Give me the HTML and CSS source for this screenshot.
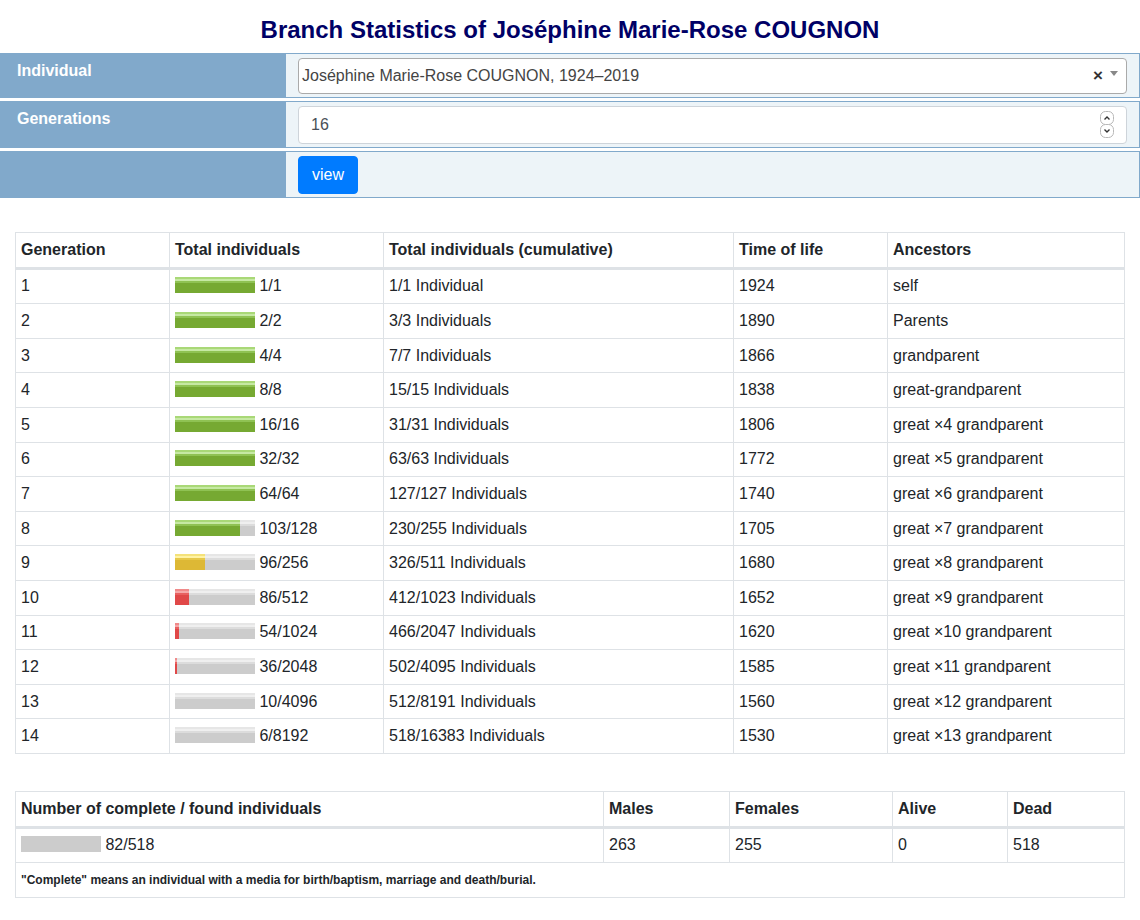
FILE: index.html
```html
<!DOCTYPE html>
<html lang="en">
<head>
<meta charset="utf-8">
<title>Branch Statistics</title>
<link rel="stylesheet" href="styles.css">
</head>
<body>
<h2 class="title">Branch Statistics of Joséphine Marie-Rose COUGNON</h2>

<div class="form">
  <div class="form-row">
    <div class="label">Individual</div>
    <div class="field">
      <div class="select">
        <span class="select-text">Joséphine Marie-Rose COUGNON, 1924–2019</span>
        <span class="select-clear">×</span>
        <span class="select-arrow"></span>
      </div>
    </div>
  </div>
  <div class="form-row">
    <div class="label">Generations</div>
    <div class="field">
      <div class="number">
        <span class="number-text">16</span>
        <svg class="spin" width="14" height="28" viewBox="0 0 14 28">
          <rect x="0.5" y="0.5" width="13" height="13" rx="5" fill="#fff" stroke="#b8b8b8"/>
          <rect x="0.5" y="13.5" width="13" height="13" rx="5" fill="#fff" stroke="#b8b8b8"/>
          <path d="M4.5 8.5 L7 6 L9.5 8.5" fill="none" stroke="#333" stroke-width="1.4"/>
          <path d="M4.5 18.5 L7 21 L9.5 18.5" fill="none" stroke="#333" stroke-width="1.4"/>
        </svg>
      </div>
    </div>
  </div>
  <div class="form-row">
    <div class="label"></div>
    <div class="field">
      <button class="btn">view</button>
    </div>
  </div>
</div>

<table class="tbl gen-table">
  <colgroup>
    <col style="width:154px"><col style="width:214px"><col style="width:350px"><col style="width:154px"><col>
  </colgroup>
  <thead>
    <tr><th>Generation</th><th>Total individuals</th><th>Total individuals (cumulative)</th><th>Time of life</th><th>Ancestors</th></tr>
  </thead>
  <tbody>
    <tr><td>1</td><td><span class="bar"><span class="fill green" style="width:80px"></span></span> 1/1</td><td>1/1 Individual</td><td>1924</td><td>self</td></tr>
    <tr><td>2</td><td><span class="bar"><span class="fill green" style="width:80px"></span></span> 2/2</td><td>3/3 Individuals</td><td>1890</td><td>Parents</td></tr>
    <tr><td>3</td><td><span class="bar"><span class="fill green" style="width:80px"></span></span> 4/4</td><td>7/7 Individuals</td><td>1866</td><td>grandparent</td></tr>
    <tr><td>4</td><td><span class="bar"><span class="fill green" style="width:80px"></span></span> 8/8</td><td>15/15 Individuals</td><td>1838</td><td>great-grandparent</td></tr>
    <tr><td>5</td><td><span class="bar"><span class="fill green" style="width:80px"></span></span> 16/16</td><td>31/31 Individuals</td><td>1806</td><td>great ×4 grandparent</td></tr>
    <tr><td>6</td><td><span class="bar"><span class="fill green" style="width:80px"></span></span> 32/32</td><td>63/63 Individuals</td><td>1772</td><td>great ×5 grandparent</td></tr>
    <tr><td>7</td><td><span class="bar"><span class="fill green" style="width:80px"></span></span> 64/64</td><td>127/127 Individuals</td><td>1740</td><td>great ×6 grandparent</td></tr>
    <tr><td>8</td><td><span class="bar"><span class="fill green" style="width:65px"></span></span> 103/128</td><td>230/255 Individuals</td><td>1705</td><td>great ×7 grandparent</td></tr>
    <tr><td>9</td><td><span class="bar"><span class="fill yellow" style="width:30px"></span></span> 96/256</td><td>326/511 Individuals</td><td>1680</td><td>great ×8 grandparent</td></tr>
    <tr><td>10</td><td><span class="bar"><span class="fill red" style="width:14px"></span></span> 86/512</td><td>412/1023 Individuals</td><td>1652</td><td>great ×9 grandparent</td></tr>
    <tr><td>11</td><td><span class="bar"><span class="fill red" style="width:4px"></span></span> 54/1024</td><td>466/2047 Individuals</td><td>1620</td><td>great ×10 grandparent</td></tr>
    <tr><td>12</td><td><span class="bar"><span class="fill red" style="width:2px"></span></span> 36/2048</td><td>502/4095 Individuals</td><td>1585</td><td>great ×11 grandparent</td></tr>
    <tr><td>13</td><td><span class="bar"><span class="fill red" style="width:0px"></span></span> 10/4096</td><td>512/8191 Individuals</td><td>1560</td><td>great ×12 grandparent</td></tr>
    <tr><td>14</td><td><span class="bar"><span class="fill red" style="width:0px"></span></span> 6/8192</td><td>518/16383 Individuals</td><td>1530</td><td>great ×13 grandparent</td></tr>
  </tbody>
</table>

<table class="tbl sum-table">
  <colgroup>
    <col style="width:588px"><col style="width:126px"><col style="width:163px"><col style="width:115px"><col>
  </colgroup>
  <thead>
    <tr><th>Number of complete / found individuals</th><th>Males</th><th>Females</th><th>Alive</th><th>Dead</th></tr>
  </thead>
  <tbody>
    <tr><td><span class="bar flat"></span> 82/518</td><td>263</td><td>255</td><td>0</td><td>518</td></tr>
    <tr><td colspan="5" class="note">"Complete" means an individual with a media for birth/baptism, marriage and death/burial.</td></tr>
  </tbody>
</table>
</body>
</html>
```
FILE: styles.css
```css
* { box-sizing: border-box; }
body {
  margin: 0;
  font-family: "Liberation Sans", Arial, sans-serif;
  font-size: 16px;
  line-height: 24px;
  color: #212529;
  background: #fff;
}
.title {
  margin: 0;
  padding: 16px 0 11px;
  height: 53px;
  text-align: center;
  font-size: 24px;
  line-height: 28px;
  font-weight: bold;
  color: #000066;
}
.form {
  display: flex;
  flex-direction: column;
  gap: 3px;
}
.form-row {
  display: grid;
  grid-template-columns: 285px 1fr;
}
.label {
  background: #81a9cb;
  color: #fff;
  font-weight: bold;
  padding: 6px 17px;
}
.field {
  background: #edf4f8;
  border: 1px solid #81a9cb;
  padding: 4px 12px 3px;
}
.select {
  height: 36px;
  border: 1px solid #aaa;
  border-radius: 4px;
  background: #fff;
  display: flex;
  align-items: center;
  padding: 0 8px 0 3px;
  color: #444;
}
.select-text { flex: 1; }
.select-clear {
  font-weight: bold;
  font-size: 17px;
  color: #333;
  margin-right: 7px;
}
.select-arrow {
  width: 0;
  height: 0;
  border-left: 4px solid transparent;
  border-right: 4px solid transparent;
  border-top: 5px solid #888;
  margin-top: -5px;
}
.number {
  height: 38px;
  border: 1px solid #ced4da;
  border-radius: 4px;
  background: #fff;
  display: flex;
  align-items: center;
  padding: 0 12px 0 12px;
  color: #495057;
}
.number-text { flex: 1; }
.spin { display: block; }
.btn {
  display: block;
  height: 38px;
  padding: 0 13px;
  border: 1px solid #007bff;
  border-radius: 4px;
  background: #007bff;
  color: #fff;
  font-family: "Liberation Sans", Arial, sans-serif;
  font-size: 16px;
}
.tbl {
  border-collapse: collapse;
  width: 1110px;
  margin: 0 15px;
  table-layout: fixed;
}
.gen-table { margin-top: 34px; }
.sum-table { margin-top: 37px; }
.tbl th, .tbl td {
  border: 1px solid #dee2e6;
  padding: 4.8px 5px;
  text-align: left;
  vertical-align: top;
  white-space: nowrap;
}
.tbl thead th {
  border-bottom: 3px solid #dee2e6;
  font-weight: bold;
}
.bar {
  display: inline-block;
  width: 80px;
  height: 16px;
  vertical-align: -2px;
  background: linear-gradient(#e6e6e6 0 2px, #efefef 2px 4px, #dcdcdc 4px 6px, #cccccc 6px);
  position: relative;
  overflow: hidden;
}
.bar.flat { background: #cccccc; }
.fill {
  display: block;
  height: 16px;
}
.fill.green { background: linear-gradient(#a9d877 0 2px, #c6e9a3 2px 4px, #8fc253 4px 6px, #76a932 6px); }
.fill.yellow { background: linear-gradient(#f4e27a 0 2px, #fff3a4 2px 4px, #e6c84a 4px 6px, #ddb835 6px); }
.fill.red { background: linear-gradient(#f08a8a 0 2px, #f6a9a9 2px 4px, #e86060 4px 6px, #e04848 6px); }
.note {
  font-size: 12px;
  font-weight: bold;
}
```
